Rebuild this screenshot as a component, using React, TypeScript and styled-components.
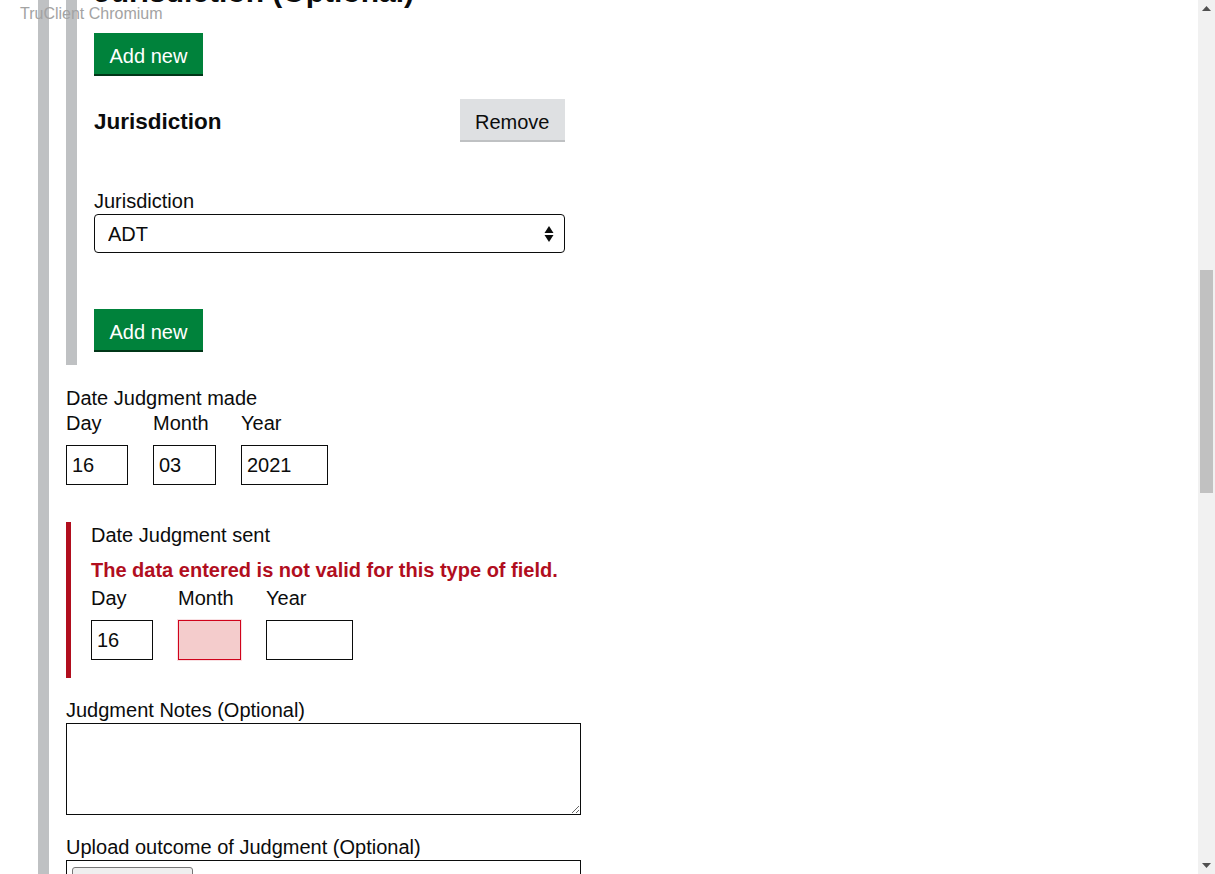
import React from "react";
import styled, { createGlobalStyle } from "styled-components";

const GlobalStyle = createGlobalStyle`
  html, body {
    margin: 0;
    padding: 0;
    overflow: hidden;
    background: #ffffff;
  }
  body {
    font-family: "Liberation Sans", Arial, sans-serif;
    color: #0b0c0c;
  }
  * {
    box-sizing: border-box;
  }
`;

const Page = styled.div`
  position: relative;
  display: flex;
  width: 1215px;
  height: 874px;
  overflow: hidden;
`;

const Viewport = styled.main`
  flex: 1;
  min-width: 0;
  overflow: hidden;
  padding-left: 38px;
  font-size: 20px;
  line-height: 25px;
`;

const Watermark = styled.div`
  position: absolute;
  left: 20px;
  top: 5px;
  font-size: 16px;
  line-height: 18px;
  color: #a3a3a3;
  pointer-events: none;
`;

const Collection = styled.div<{ $offset?: number; $padBottom?: number }>`
  border-left: 11px solid #bfc1c3;
  padding-left: 17px;
  margin-top: ${(p) => p.$offset ?? 0}px;
  padding-bottom: ${(p) => p.$padBottom ?? 0}px;
`;

const SectionHeading = styled.h2`
  margin: 0 0 24px;
  font-size: 30px;
  line-height: 34px;
  font-weight: bold;
`;

const Button = styled.button<{ $variant?: "primary" | "secondary"; $top?: number; $bottom?: number }>`
  display: inline-flex;
  align-items: center;
  justify-content: center;
  height: 41px;
  padding: 5px 15.5px 0;
  margin: ${(p) => p.$top ?? 0}px 0 ${(p) => p.$bottom ?? 0}px;
  border: 0;
  border-radius: 0;
  font-family: inherit;
  font-size: 20px;
  line-height: 25px;
  cursor: pointer;
  background: ${(p) => (p.$variant === "secondary" ? "#dee0e2" : "#00823b")};
  color: ${(p) => (p.$variant === "secondary" ? "#0b0c0c" : "#ffffff")};
  box-shadow: 0 2px 0 ${(p) => (p.$variant === "secondary" ? "#bfc1c3" : "#003618")};
`;

const ButtonRow = styled.div`
  display: block;
`;

const ItemHeader = styled.div`
  display: flex;
  align-items: center;
  justify-content: space-between;
  width: 471px;
`;

const ItemTitle = styled.h3`
  margin: 4px 0 0;
  font-size: 22.5px;
  line-height: 28px;
  font-weight: bold;
`;

const Label = styled.label<{ $top?: number }>`
  display: block;
  margin-top: ${(p) => p.$top ?? 0}px;
  font-size: 20px;
  line-height: 25px;
`;

const SelectWrap = styled.div`
  position: relative;
  width: 471px;
  height: 39px;
`;

const Select = styled.select`
  appearance: none;
  width: 100%;
  height: 100%;
  padding: 0 30px 0 13px;
  border: 1px solid #0b0c0c;
  border-radius: 4px;
  background: #ffffff;
  font-family: inherit;
  font-size: 20px;
  color: #0b0c0c;
`;

const SelectArrows = styled.svg`
  position: absolute;
  right: 11px;
  top: 12px;
  pointer-events: none;
`;

const DateGroup = styled.div<{ $top?: number; $error?: boolean }>`
  margin-top: ${(p) => p.$top ?? 0}px;
  ${(p) =>
    p.$error
      ? `
    border-left: 5px solid #b10e1e;
    padding: 1px 0 18px 20px;
  `
      : ""}
`;

const ErrorMessage = styled.p`
  margin: 10px 0 0;
  font-size: 20px;
  line-height: 25px;
  font-weight: bold;
  color: #b10e1e;
`;

const DateRow = styled.div<{ $top?: number }>`
  display: flex;
  gap: 25px;
  margin-top: ${(p) => p.$top ?? 0}px;
`;

const DateItem = styled.div`
  display: flex;
  flex-direction: column;
`;

const DateInput = styled.input<{ $width: number; $error?: boolean }>`
  width: ${(p) => p.$width}px;
  height: 40px;
  margin-top: 9px;
  padding: 0 5px;
  border: 1px solid ${(p) => (p.$error ? "#d0021b" : "#0b0c0c")};
  border-radius: 0;
  background: ${(p) => (p.$error ? "#f4cccc" : "#ffffff")};
  box-shadow: ${(p) => (p.$error ? "0 0 0 1px rgba(208, 2, 27, 0.12)" : "none")};
  font-family: inherit;
  font-size: 20px;
  color: #0b0c0c;
`;

const TextArea = styled.textarea`
  display: block;
  width: 515px;
  height: 92px;
  margin: 0;
  border: 1px solid #0b0c0c;
  border-radius: 0;
  font-family: inherit;
  font-size: 20px;
`;

const FileBox = styled.div`
  width: 515px;
  height: 44px;
  padding: 6px 5px;
  border: 1px solid #0b0c0c;
`;

const FileButton = styled.button`
  width: 121px;
  height: 30px;
  border: 1px solid #767676;
  border-radius: 3px;
  background: #efefef;
  font-family: inherit;
  font-size: 13px;
`;

const Scrollbar = styled.div`
  display: flex;
  flex-direction: column;
  width: 17px;
  height: 874px;
  background: #f1f1f1;
`;

const ScrollArrow = styled.div`
  display: flex;
  align-items: center;
  justify-content: center;
  height: 17px;
`;

const ScrollTrack = styled.div`
  flex: 1;
  padding: 253px 2px 0;
`;

const ScrollThumb = styled.div`
  height: 223px;
  background: #c1c1c1;
`;

type DateField = { label: string; width: number; value: string; error?: boolean };

const madeFields: DateField[] = [
  { label: "Day", width: 62, value: "16" },
  { label: "Month", width: 63, value: "03" },
  { label: "Year", width: 87, value: "2021" },
];

const sentFields: DateField[] = [
  { label: "Day", width: 62, value: "16" },
  { label: "Month", width: 63, value: "", error: true },
  { label: "Year", width: 87, value: "" },
];

function DateFields({ fields, top }: { fields: DateField[]; top: number }) {
  return (
    <DateRow $top={top}>
      {fields.map((f) => (
        <DateItem key={f.label}>
          <Label>{f.label}</Label>
          <DateInput $width={f.width} $error={f.error} defaultValue={f.value} />
        </DateItem>
      ))}
    </DateRow>
  );
}

export default function App() {
  return (
    <>
      <GlobalStyle />
      <Page>
        <Viewport>
          <Collection $offset={-25}>
            <Collection $padBottom={15}>
              <SectionHeading>Jurisdiction (Optional)</SectionHeading>
              <ButtonRow>
                <Button $bottom={25}>Add new</Button>
              </ButtonRow>
              <ItemHeader>
                <ItemTitle>Jurisdiction</ItemTitle>
                <Button $variant="secondary">Remove</Button>
              </ItemHeader>
              <Label $top={49}>Jurisdiction</Label>
              <SelectWrap>
                <Select defaultValue="ADT">
                  <option value="ADT">ADT</option>
                </Select>
                <SelectArrows width="10" height="16" viewBox="0 0 10 16">
                  <path d="M0.5 7 L5 0 L9.5 7 Z" fill="#0b0c0c" />
                  <path d="M0.5 9 L9.5 9 L5 16 Z" fill="#0b0c0c" />
                </SelectArrows>
              </SelectWrap>
              <ButtonRow>
                <Button $top={56}>Add new</Button>
              </ButtonRow>
            </Collection>

            <DateGroup $top={21}>
              <Label>Date Judgment made</Label>
              <DateFields fields={madeFields} top={0} />
            </DateGroup>

            <DateGroup $top={37} $error>
              <Label>Date Judgment sent</Label>
              <ErrorMessage>The data entered is not valid for this type of field.</ErrorMessage>
              <DateFields fields={sentFields} top={3} />
            </DateGroup>

            <Label $top={20}>Judgment Notes (Optional)</Label>
            <TextArea />

            <Label $top={20}>Upload outcome of Judgment (Optional)</Label>
            <FileBox>
              <FileButton>Choose File</FileButton>
            </FileBox>
          </Collection>
        </Viewport>
        <Scrollbar>
          <ScrollArrow>
            <svg width="9" height="5" viewBox="0 0 9 5">
              <path d="M0 5 L4.5 0 L9 5 Z" fill="#505050" />
            </svg>
          </ScrollArrow>
          <ScrollTrack>
            <ScrollThumb />
          </ScrollTrack>
          <ScrollArrow>
            <svg width="9" height="5" viewBox="0 0 9 5">
              <path d="M0 0 L9 0 L4.5 5 Z" fill="#505050" />
            </svg>
          </ScrollArrow>
        </Scrollbar>
        <Watermark>TruClient Chromium</Watermark>
      </Page>
    </>
  );
}
